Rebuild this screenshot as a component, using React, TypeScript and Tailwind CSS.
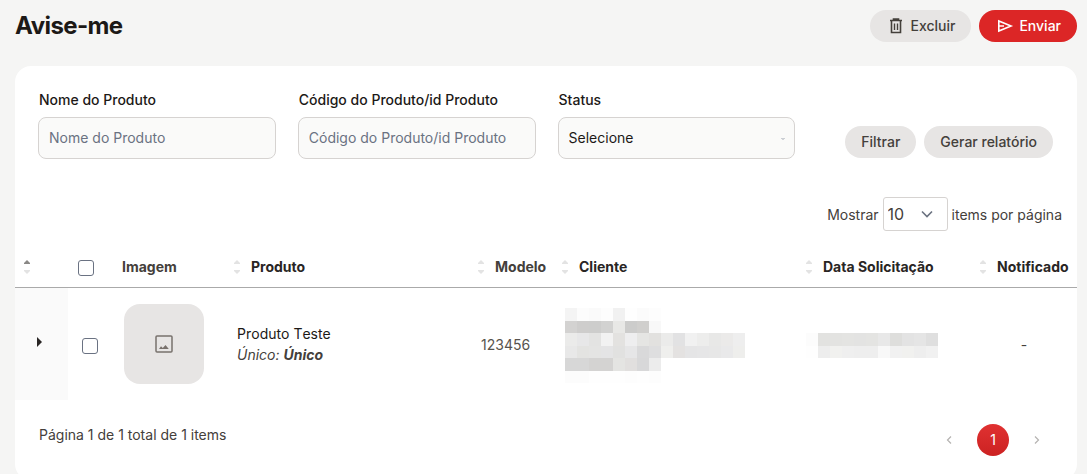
import type { ReactNode } from "react";

const CLIENT_MOSAIC = [
  ["#f4f4f4", "#fcfcfc", "#fafafa", "#fdfdfd", "#f1f1f1", "#fefefe", "#fbfbfb", "#fdfdfd", "", "", "", "", "", "", ""],
  ["#d3d2d1", "#cecdcc", "#cdcdcc", "#d2d2d1", "#e8e8e6", "#cccccb", "#d0cfcd", "#f8f8f8", "", "", "", "", "", "", ""],
  ["#ebebea", "#e7e7e8", "#e3e3e2", "#f2f2f2", "#e3e2e0", "#eeeeef", "#e5e5e3", "#e2e1df", "#ebebea", "#e2e2e3", "#f1f1f1", "#ededec", "#e8e8e7", "#ebeae9", "#eeeeee"],
  ["#e8e8e8", "#e3e3e1", "#e4e4e3", "#e4e4e5", "#e1e1e0", "#e6e6e7", "#d9d9da", "#dededf", "#efefed", "#e4e2e1", "#e5e5e6", "#e6e6e7", "#e7e7e7", "#e9e9ea", "#eeeeec"],
  ["#d7d7d7", "#d7d7d7", "#d4d3d2", "#d4d3d2", "#e4e4e2", "#e1dfde", "#d8d8d9", "#ececec", "", "", "", "", "", "", ""],
  ["#fcfcfc", "#fcfcfc", "#fefefe", "#fefefe", "#fefefe", "#fdfdfd", "#fefefe", "#fdfdfd", "", "", "", "", "", "", ""],
];

const DATE_MOSAIC = [
  ["#fcfcfc", "#e2e2e0", "#e3e3e1", "#e4e4e2", "#e3e3e2", "#e4e4e2", "#e8e8e8", "#dededc", "#e3e3e3", "#e5e5e5", "#dfdfdf"],
  ["#fefefe", "#ededed", "#f1f1ef", "#efefef", "#eeeeee", "#eeeeee", "#f8f8f8", "#f1f1f1", "#f1f1ef", "#eeeeee", "#f1f1f1"],
];

function Mosaic({ rows }: { rows: string[][] }) {
  return (
    <div className="flex flex-col" aria-hidden="true">
      {rows.map((row, y) => (
        <div key={y} className={`flex ${y % 2 === 0 ? "h-[13px]" : "h-3"}`}>
          {row.map((color, x) => (
            <span key={x} className="w-3 shrink-0" style={{ backgroundColor: color || undefined }} />
          ))}
        </div>
      ))}
    </div>
  );
}

function SortIcon({ active }: { active?: boolean }) {
  return (
    <svg width="8" height="16" viewBox="0 0 8 16" className="shrink-0">
      <path d="M4 1 L7 4 V5 H1 V4 Z" fill={active ? "#8a8886" : "#e3e3e3"} />
      <path d="M1 11 H7 V12 L4 15 L1 12 Z" fill="#e3e3e3" />
    </svg>
  );
}

function SortHeader({ children, muted }: { children: ReactNode; muted?: boolean }) {
  return (
    <th className="p-0 pl-3 text-left">
      <button className={`flex items-center gap-2.5 font-bold ${muted ? "text-stone-700" : "text-stone-800"}`}>
        <SortIcon />
        {children}
      </button>
    </th>
  );
}

function Check({ label }: { label: string }) {
  return (
    <input
      type="checkbox"
      aria-label={label}
      className="block h-4 w-4 appearance-none rounded-[3px] border border-gray-500 bg-white checked:bg-[#dc2626]"
    />
  );
}

function TextField({ id, label }: { id: string; label: string }) {
  return (
    <div className="flex-1">
      <label htmlFor={id} className="block pl-px font-medium text-stone-900">{label}</label>
      <input
        id={id}
        type="text"
        placeholder={label}
        className="mt-[7px] block h-[42px] w-full rounded-lg border border-stone-300 bg-[#fafaf9] px-2.5 pb-0.5 text-stone-900 placeholder:text-gray-500"
      />
    </div>
  );
}

const PILL = "flex h-8 items-center rounded-full px-4 font-medium";

export default function App() {
  return (
    <div className="min-h-screen bg-[#f5f5f4] pr-2.5 pl-[15px] font-['Inter',sans-serif] text-sm leading-5 text-stone-700">
      <header className="flex h-[66px] items-start justify-between pt-2.5">
        <h1 className="text-2xl font-bold tracking-tight text-stone-900">Avise-me</h1>
        <div className="flex gap-2">
          <button className={`${PILL} bg-stone-200 text-stone-700`}>
            <svg width="20" height="20" viewBox="0 0 20 20" fill="none" stroke="currentColor" className="mr-1">
              <path d="M4 4.5h12M7.5 4V3h5v1M5.5 5v11.5h9V5" strokeWidth="1.6" />
              <path d="M8.5 7.5v6.5M11.5 7.5v6.5" strokeWidth="1.4" />
            </svg>
            Excluir
          </button>
          <button className={`${PILL} bg-[#dc2626] text-white`}>
            <svg width="20" height="20" viewBox="0 0 20 20" fill="none" stroke="currentColor" strokeWidth="1.6" className="mr-1">
              <path d="M3.8 5v10L16 10zM4 10h5" />
            </svg>
            Enviar
          </button>
        </div>
      </header>

      <main className="rounded-2xl bg-white pb-6">
        <form className="flex items-end px-6 pt-6" onSubmit={(e) => e.preventDefault()}>
          <div className="-ml-px flex flex-1 gap-[22px]">
            <TextField id="name" label="Nome do Produto" />
            <TextField id="code" label="Código do Produto/id Produto" />
            <div className="flex-1">
              <label htmlFor="status" className="block pl-px font-medium text-stone-900">Status</label>
              <div className="relative mt-[7px]">
                <select
                  id="status"
                  className="block h-[42px] w-full appearance-none rounded-lg border border-stone-300 bg-[#fafaf9] px-2.5 text-stone-900"
                >
                  <option>Selecione</option>
                </select>
                <svg width="4" height="4" viewBox="0 0 4 4" className="pointer-events-none absolute top-5 right-2.5">
                  <path d="M.5 1 L2 2.5 L3.5 1" fill="none" stroke="#9ca3af" />
                </svg>
              </div>
            </div>
          </div>
          <div className="ml-[50px] flex gap-2 pb-px">
            <button className={`${PILL} bg-stone-200 text-stone-700`}>Filtrar</button>
            <button className={`${PILL} bg-stone-200 text-stone-700`}>Gerar relatório</button>
          </div>
        </form>

        <div className="mt-[38px] flex items-center justify-end gap-1 pr-[15px]">
          <label htmlFor="pageSize" className="pt-0.5">Mostrar</label>
          <div className="relative">
            <select
              id="pageSize"
              className="block h-[34px] w-[65px] appearance-none rounded-[3px] border border-stone-300 bg-white pl-1 text-base text-stone-700"
            >
              <option>10</option>
            </select>
            <svg width="12" height="8" viewBox="0 0 12 8" className="pointer-events-none absolute top-[13px] right-[15px]">
              <path d="M1 1.5 L6 6.5 L11 1.5" fill="none" stroke="#6b7280" strokeWidth="1.6" />
            </svg>
          </div>
          <span className="pt-0.5">items por página</span>
        </div>

        <table className="mt-4 w-full table-fixed border-collapse">
          <colgroup>
            <col className="w-[5%]" />
            <col className="w-10" />
            <col className="w-[113px]" />
            <col className="w-[23%]" />
            <col className="w-[84px]" />
            <col className="w-[23%]" />
            <col className="w-[174px]" />
            <col className="w-[110px]" />
          </colgroup>
          <thead>
            <tr className="h-10 border-b border-[#aaaaaa]">
              <th className="p-0 pl-2">
                <button aria-label="Ordenar" className="block">
                  <SortIcon active />
                </button>
              </th>
              <th className="p-0 pt-0.5 pl-2.5"><Check label="Selecionar todos" /></th>
              <th className="p-0 pl-3.5 text-left font-bold">Imagem</th>
              <SortHeader>Produto</SortHeader>
              <SortHeader muted>Modelo</SortHeader>
              <SortHeader>Cliente</SortHeader>
              <SortHeader>Data Solicitação</SortHeader>
              <SortHeader>Notificado</SortHeader>
            </tr>
          </thead>
          <tbody className="[font-kerning:none]">
            <tr className="h-28">
              <td className="bg-[#fafafa] p-0">
                <button aria-label="Expandir" className="ml-[22px] block pb-1">
                  <svg width="5" height="10" viewBox="0 0 5 10">
                    <path d="M0 0 L5 5 L0 10 Z" fill="#292524" />
                  </svg>
                </button>
              </td>
              <td className="p-0 pt-1 pl-3.5"><Check label="Selecionar Produto Teste" /></td>
              <td className="p-4">
                <div className="flex h-20 w-20 items-center justify-center rounded-2xl bg-stone-200">
                  <svg width="18" height="18" viewBox="0 0 18 18">
                    <rect x="1" y="1" width="16" height="16" rx="1" fill="none" stroke="#78716c" strokeWidth="1.5" />
                    <path d="M4 14 L6 11.2 L7.8 13 L10.5 10 L13.8 14 Z" fill="#78716c" />
                  </svg>
                </div>
              </td>
              <td className="p-0 pl-4 leading-[21px]">
                <div className="text-stone-900">Produto Teste</div>
                <em>Único: <strong>Único</strong></em>
              </td>
              <td className="p-0 pt-0.5 pl-4 text-stone-600">123456</td>
              <td className="p-0 pt-[3px] pl-4"><Mosaic rows={CLIENT_MOSAIC} /></td>
              <td className="p-0 pt-[3px] pl-[13px]"><Mosaic rows={DATE_MOSAIC} /></td>
              <td className="p-0 pt-0.5 pl-1 text-center">-</td>
            </tr>
          </tbody>
        </table>

        <footer className="mt-6 flex items-start justify-between px-6">
          <p className="leading-[22px]">Página 1 de 1 total de 1 items</p>
          <nav aria-label="Paginação" className="flex items-center gap-3">
            <button aria-label="Anterior" className="flex h-8 w-8 items-center justify-center">
              <svg width="6" height="8" viewBox="0 0 6 8">
                <path d="M5 0.5 L1.5 4 L5 7.5" fill="none" stroke="#b5b3b1" strokeWidth="1.2" />
              </svg>
            </button>
            <button aria-current="page" className="h-8 w-8 rounded-full bg-linear-to-b from-[#e03131] to-[#cc2222] text-white">
              1
            </button>
            <button aria-label="Próxima" className="flex h-8 w-8 items-center justify-center">
              <svg width="6" height="8" viewBox="0 0 6 8">
                <path d="M1 0.5 L4.5 4 L1 7.5" fill="none" stroke="#b5b3b1" strokeWidth="1.2" />
              </svg>
            </button>
          </nav>
        </footer>
      </main>
    </div>
  );
}
